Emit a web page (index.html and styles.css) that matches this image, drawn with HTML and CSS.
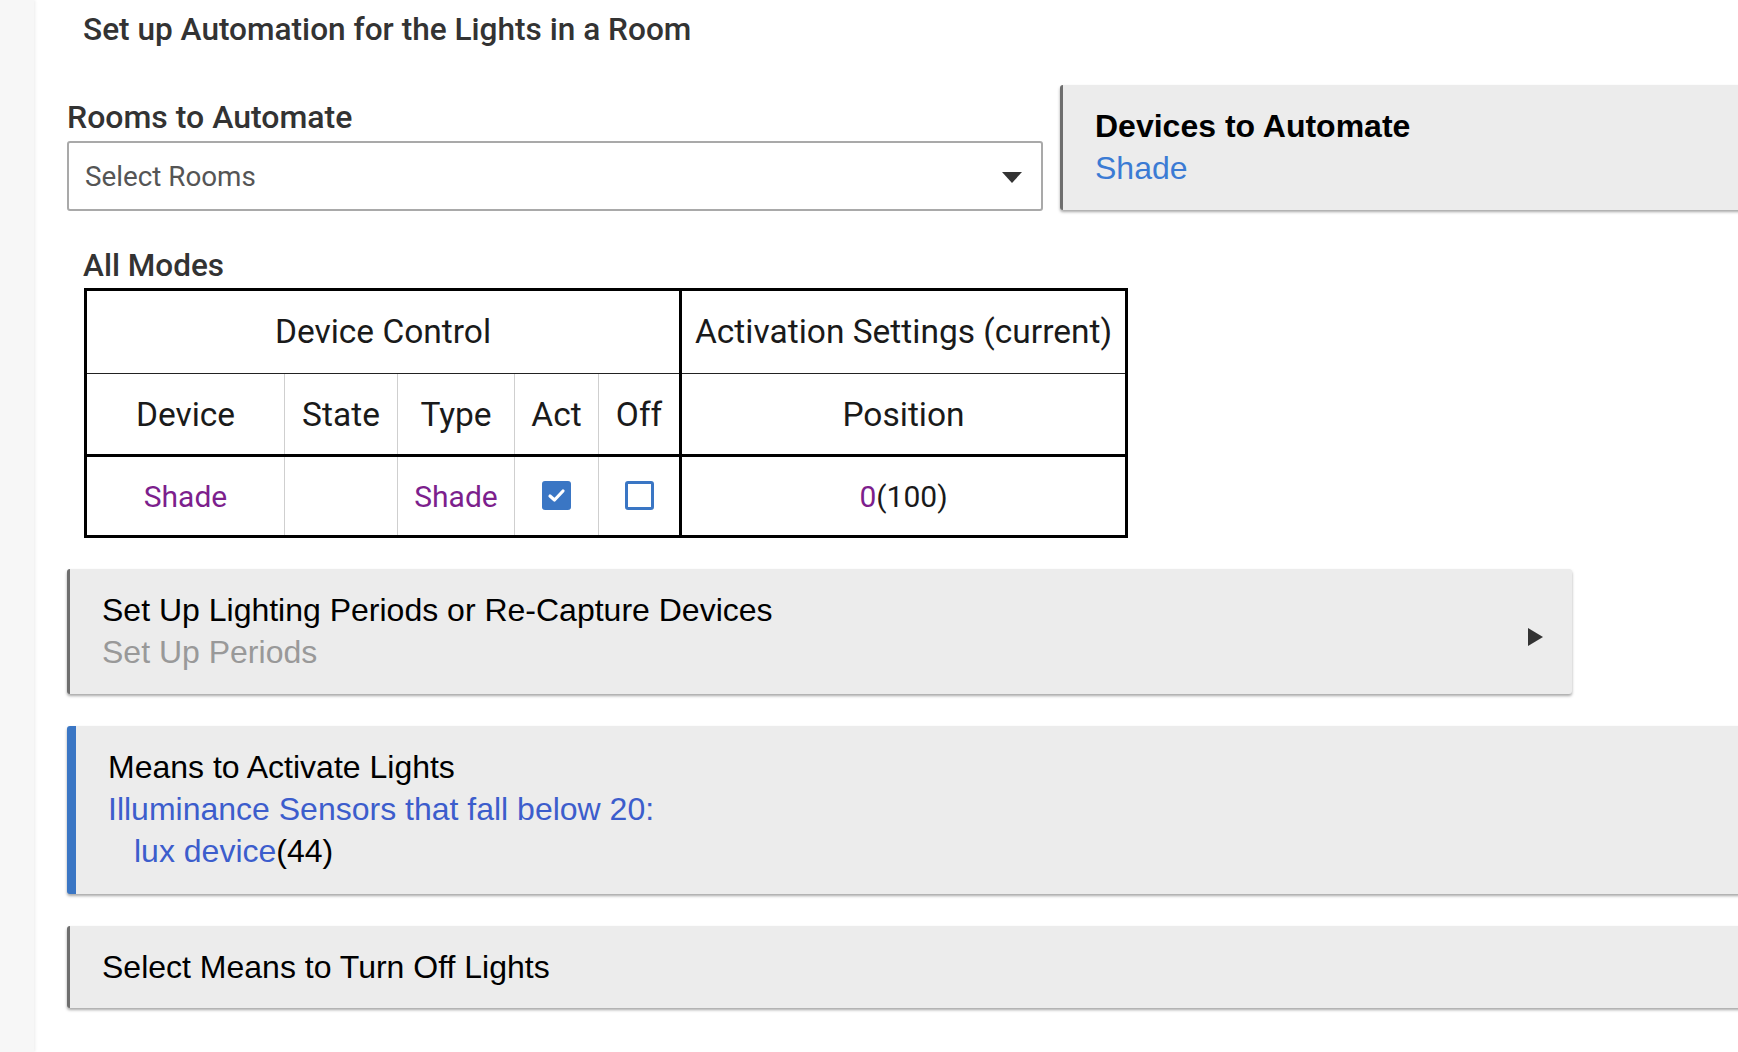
FILE: index.html
```html
<!DOCTYPE html>
<html lang="en">
<head>
<meta charset="utf-8">
<title>Room Lighting</title>
<link rel="stylesheet" href="styles.css">
</head>
<body>
<div class="page">
  <aside class="rail"></aside>
  <main class="main">
    <h1 class="title">Set up Automation for the Lights in a Room</h1>

    <div class="top-row">
      <div class="rooms">
        <div class="field-label">Rooms to Automate</div>
        <div class="select">
          <span class="select-text">Select Rooms</span>
          <svg class="caret" width="20" height="11" viewBox="0 0 20 11"><polygon points="0,0 20,0 10,11" fill="#333"/></svg>
        </div>
      </div>
      <div class="panel devices">
        <div class="panel-line strong">Devices to Automate</div>
        <div class="panel-line link-blue">Shade</div>
      </div>
    </div>

    <div class="modes-label">All Modes</div>
    <table class="grid">
      <colgroup>
        <col class="c-device"><col class="c-state"><col class="c-type"><col class="c-act"><col class="c-off"><col class="c-pos">
      </colgroup>
      <tr class="r-head1">
        <th colspan="5" class="sep-right">Device Control</th>
        <th>Activation Settings (current)</th>
      </tr>
      <tr class="r-head2">
        <th>Device</th>
        <th>State</th>
        <th>Type</th>
        <th>Act</th>
        <th class="sep-right">Off</th>
        <th>Position</th>
      </tr>
      <tr class="r-body">
        <td><span class="purple">Shade</span></td>
        <td></td>
        <td><span class="purple">Shade</span></td>
        <td><span class="cb cb-on"><svg width="19" height="15" viewBox="0 0 19 15"><polyline points="3,8 7.5,12 16,3" fill="none" stroke="#fff" stroke-width="3.2" stroke-linecap="round" stroke-linejoin="round"/></svg></span></td>
        <td class="sep-right"><span class="cb cb-off"></span></td>
        <td><span class="purple">0</span>(100)</td>
      </tr>
    </table>

    <div class="panel lighting">
      <div class="panel-text">
        <div class="panel-line">Set Up Lighting Periods or Re-Capture Devices</div>
        <div class="panel-line muted">Set Up Periods</div>
      </div>
      <svg class="arrow" width="15" height="18" viewBox="0 0 15 18"><polygon points="0,0 15,9 0,18" fill="#333"/></svg>
    </div>

    <div class="panel means">
      <div class="panel-line">Means to Activate Lights</div>
      <div class="panel-line indigo">Illuminance Sensors that fall below 20:</div>
      <div class="panel-line indent"><span class="indigo">lux device</span>(44)</div>
    </div>

    <div class="panel off">
      <div class="panel-line">Select Means to Turn Off Lights</div>
    </div>
  </main>
</div>
</body>
</html>
```
FILE: styles.css
```css
html, body {
  margin: 0;
  padding: 0;
  background: #fff;
  overflow: hidden;
}

.page {
  display: flex;
  min-height: 1052px;
  width: 1738px;
}

.rail {
  flex: 0 0 34px;
  background: #f7f7f7;
  box-shadow: 1px 0 3px rgba(0, 0, 0, 0.08);
  position: relative;
  z-index: 1;
}

.main {
  flex: 1 1 auto;
  padding-left: 33px;
  overflow: hidden;
  font-family: Roboto, "Liberation Sans", sans-serif;
  color: #333;
}

.title {
  margin: 0;
  padding: 14px 0 0 16px;
  font-size: 31.6px;
  line-height: 32px;
  font-weight: 500;
  color: #333;
}

.top-row {
  display: grid;
  grid-template-columns: 976px 1fr;
  column-gap: 17px;
  margin-top: 39px;
  align-items: start;
}

.field-label {
  margin-top: 16px;
  font-size: 32px;
  line-height: 32px;
  font-weight: 500;
  color: #333;
}

.select {
  margin-top: 8px;
  height: 66px;
  border: 2px solid #a9a9a9;
  border-radius: 3px;
  display: flex;
  align-items: center;
  justify-content: space-between;
  padding: 0 19px 0 16px;
  box-sizing: content-box;
}

.select-text {
  font-size: 27.8px;
  color: #555;
}

.caret {
  display: block;
  margin-top: 2px;
}

.panel {
  background: #ececec;
  border-left: 3px solid #6e6e6e;
  border-radius: 3px;
  box-shadow: 0 2px 3px rgba(0, 0, 0, 0.35);
  font-family: "Liberation Sans", Arial, sans-serif;
  font-size: 32px;
  color: #000;
}

.panel-line {
  line-height: 42px;
  white-space: nowrap;
}

.strong {
  font-weight: bold;
}

.link-blue {
  color: #3b7bd4;
}

.devices {
  padding: 20px 0 21px 32px;
  margin-right: -20px;
}

.modes-label {
  margin-top: 39px;
  padding-left: 16px;
  font-size: 31.5px;
  line-height: 32px;
  font-weight: 500;
  color: #333;
}

.grid {
  margin: 6px 0 0 17px;
  border-collapse: collapse;
  table-layout: fixed;
  width: 1044px;
  border: 3px solid #000;
  font-family: Roboto, "Liberation Sans", sans-serif;
  font-size: 33.5px;
  color: #1a1a1a;
}

.c-device { width: 199px; }
.c-state { width: 113px; }
.c-type { width: 117px; }
.c-act { width: 84px; }
.c-off { width: 82px; }
.c-pos { width: 446px; }

.grid th,
.grid td {
  padding: 0;
  text-align: center;
  font-weight: 400;
  white-space: nowrap;
}

.r-head1 th {
  height: 80px;
  padding-bottom: 2px;
  border-bottom: 1px solid #222;
}

.r-head2 th {
  height: 80px;
  border-bottom: 3px solid #000;
  border-left: 1px solid #cfcfcf;
}

.r-body td {
  height: 78px;
  font-size: 30px;
  border-left: 1px solid #cfcfcf;
}

.grid .sep-right {
  border-right: 3px solid #000;
}

.purple {
  color: #7d1f8d;
}

.cb {
  display: inline-flex;
  align-items: center;
  justify-content: center;
  width: 29px;
  height: 29px;
  box-sizing: border-box;
  border-radius: 3px;
  vertical-align: middle;
  position: relative;
  top: -3px;
}

.cb-on {
  background: #3a76c4;
}

.cb-off {
  border: 3px solid #3a76c4;
  background: #fff;
}

.lighting {
  margin-top: 31px;
  width: 1505px;
  box-sizing: border-box;
  padding: 20px 29px 21px 32px;
  display: flex;
  align-items: center;
  justify-content: space-between;
}

.muted {
  color: #999;
}

.arrow {
  display: block;
  margin-top: 12px;
}

.means {
  margin-top: 32px;
  margin-right: -20px;
  border-left: 9px solid #3a76c4;
  padding: 20px 0 22px 32px;
}

.indigo {
  color: #3c5dcc;
}

.indent {
  padding-left: 26px;
}

.off {
  margin-top: 32px;
  margin-right: -20px;
  padding: 20px 0 20px 32px;
}
```
